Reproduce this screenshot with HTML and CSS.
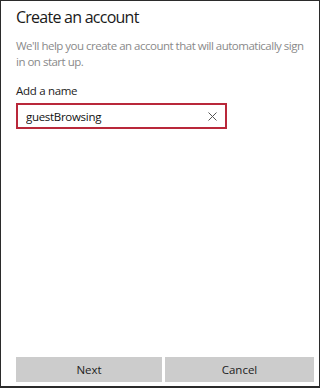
FILE: index.html
```html
<!DOCTYPE html>
<html lang="en">
<head>
    <meta charset="UTF-8">
    <title>Create an account</title>
    <link rel="stylesheet" href="styles.css">
</head>
<body>

<div class="ventana">
    <div class="contenido">
        <h1 class="titulo">Create an account</h1>
        <p class="descripcion">We'll help you create an account that will automatically sign in on start up.</p>

        <label class="etiqueta" for="nombre">Add a name</label>
        <div class="campo">
            <input class="campo-texto" id="nombre" type="text" value="guestBrowsing">
            <span class="campo-borrar">
                <svg width="9" height="9" viewBox="0 0 9 9"><path d="M0.5 0.5 L8.5 8.5 M8.5 0.5 L0.5 8.5" stroke="#555" stroke-width="1" fill="none"/></svg>
            </span>
        </div>
    </div>

    <!-- Botones de abajo -->
    <div class="botones">
        <button class="btn">Next</button>
        <button class="btn">Cancel</button>
    </div>
</div>

</body>
</html>
```

FILE: styles.css
```css
html, body {
    margin: 0;
    padding: 0;
    width: 100%;
    height: 100%;
    background: #ffffff;
    font-family: 'Open Sans', 'Noto Sans', Arial, sans-serif;
    color: #1f1f1f;
}

.ventana {
    box-sizing: border-box;
    width: 320px;
    height: 388px;
    border: 1px solid #2b2b2b;
    border-bottom-width: 2px;
    display: flex;
    flex-direction: column;
    justify-content: space-between;
}

.contenido { padding: 5px 6px 0 15px; }

.titulo { font-size: 16px; font-weight: 400; margin: 0 0 10px 0; color: #1a1a1a; letter-spacing: -0.75px; }
.descripcion { font-size: 11.5px; color: #8a8a8a; margin: 0 0 13px 0; line-height: 16px; letter-spacing: -0.5px; }

.etiqueta { display: block; font-size: 11.5px; color: #222; margin-bottom: 5px; letter-spacing: -0.3px; }

/* caja del nombre con borde rojo */
.campo {
    width: 211px;
    height: 26px;
    box-sizing: border-box;
    border: 2px solid #b9283a;
    display: flex;
    align-items: center;
    padding: 0 8px 0 8px;
}
.campo-texto {
    flex: 1;
    border: none;
    outline: none;
    padding: 0;
    font-family: inherit;
    font-size: 11.5px;
    letter-spacing: -0.3px;
    color: #111;
    background: transparent;
    min-width: 0;
}
.campo-borrar { display: flex; align-items: center; }

.botones {
    display: grid;
    grid-template-columns: 146px 149px;
    gap: 3px;
    padding: 0 5px 4px 15px;
}
.btn {
    background: #cccccc;
    border: none;
    height: 25px;
    font-family: inherit;
    font-size: 11.5px;
    color: #222;
    padding: 0;
}
```
